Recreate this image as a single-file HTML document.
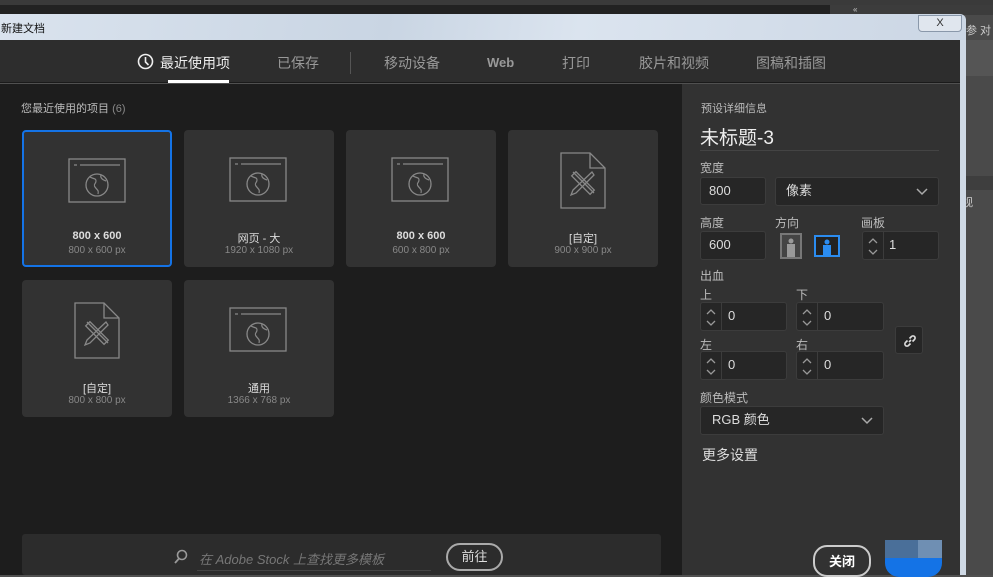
<!DOCTYPE html>
<html><head><meta charset="utf-8"><style>
*{margin:0;padding:0;box-sizing:border-box}
body{width:993px;height:575px;overflow:hidden;background:#505050;font-family:"Liberation Sans","Noto Sans CJK SC",sans-serif;position:relative;color:#ddd}
.a{position:absolute}
.card{position:absolute;width:150px;height:137px;background:#323232;border-radius:4px;text-align:center}
.card .t{position:absolute;top:100px;width:100%;font-size:11px;color:#ddd}
.card .s{position:absolute;top:115px;width:100%;font-size:10px;color:#888}
.card svg{position:absolute;left:45px;top:27px}
.lbl{position:absolute;font-size:12px;color:#bbb}
.box{position:absolute;background:#262626;border:1px solid #3c3c3c;border-radius:3px;font-size:13px;color:#ddd;line-height:26px}
.sp{position:absolute;left:0;top:0;bottom:0;width:21px;border-right:1px solid #3c3c3c}
.sp svg{position:absolute;left:5px;top:6px}
.dd{position:absolute;right:10px;top:10px}
.tab{position:absolute;top:53px;font-size:14px;color:#999}
</style></head><body>
<svg width="0" height="0" style="position:absolute"><defs>
<g id="web"><rect x="1" y="1" width="56" height="43" fill="none" stroke="#888" stroke-width="1.3"/><path d="M6 7h3M12 7h40" stroke="#888" stroke-width="1.3"/><circle cx="29" cy="27" r="11" fill="none" stroke="#888" stroke-width="1.3"/><path d="M22 19c3 2 6 1 6 4s-3 3-1 6 4 3 3 7M33 17c-1 3 2 5 5 6" fill="none" stroke="#888" stroke-width="1.2"/></g>
<g id="doc"><path d="M1 1h29l15 15v40H1z" fill="none" stroke="#888" stroke-width="1.3"/><path d="M30 1v15h15" fill="none" stroke="#888" stroke-width="1.3"/><path d="M13 20l21 21M32 20L13 38l-2 5 5-2 18-18z" fill="none" stroke="#888" stroke-width="1.3"/><rect x="20" y="18" width="6" height="26" transform="rotate(-45 23 31)" fill="none" stroke="#888" stroke-width="1.3"/></g>
<g id="spin"><path d="M1 5l4-4 4 4M1 12l4 4 4-4" fill="none" stroke="#999" stroke-width="1.3"/></g>
<g id="chev"><path d="M1 1l5 5 5-5" fill="none" stroke="#aaa" stroke-width="1.5"/></g>
</defs></svg>
<div class="a" style="left:0;top:0;width:993px;height:5px;background:#3a3a3a"></div>
<div class="a" style="left:0;top:5px;width:830px;height:10px;background:#222"></div>
<div class="a" style="left:830px;top:5px;width:163px;height:10px;background:#3c3c3c;font-size:8px;color:#ccc;padding-left:23px;line-height:10px">«</div>
<div class="a" style="left:966px;top:15px;width:27px;height:560px;background:#4a4a4a"></div>
<div class="a" style="left:966px;top:22px;font-size:11px;color:#ccc">参 对</div>
<div class="a" style="left:966px;top:40px;width:27px;height:36px;background:#555"></div>
<div class="a" style="left:966px;top:176px;width:27px;height:14px;background:#3e3e3e"></div>
<div class="a" style="left:962px;top:194px;font-size:11px;color:#ccc">视</div>
<div class="a" style="left:0;top:14px;width:966px;height:26px;background:linear-gradient(100deg,#dae3ee,#c9d5e3 40%,#dbe4ef 60%,#cbd6e4);border-top-right-radius:6px"></div>
<div class="a" style="left:1px;top:20px;font-size:11px;color:#111">新建文档</div>
<div class="a" style="left:918px;top:15px;width:44px;height:17px;border:1px solid #8a98aa;border-radius:0 0 4px 4px;background:#e0e6ee;text-align:center;font-size:11px;line-height:15px;color:#333">X</div>
<div class="a" style="left:960px;top:40px;width:6px;height:535px;background:#cfd9e5"></div>
<div class="a" style="left:0;top:40px;width:960px;height:43px;background:#2d2d2d;border-bottom:1px solid #1a1a1a"></div>
<svg class="a" style="left:137px;top:53px" width="17" height="17"><circle cx="8.5" cy="8.5" r="7" fill="none" stroke="#eee" stroke-width="1.6"/><path d="M8.5 4v5l3 3" fill="none" stroke="#eee" stroke-width="1.6"/></svg>
<div class="tab" style="left:160px;color:#eee">最近使用项</div>
<div class="a" style="left:168px;top:80px;width:61px;height:3px;background:#fff"></div>
<div class="tab" style="left:277px">已保存</div>
<div class="a" style="left:350px;top:52px;width:1px;height:22px;background:#555"></div>
<div class="tab" style="left:384px">移动设备</div>
<div class="tab" style="left:487px;top:55px;font-size:13px;font-weight:bold">Web</div>
<div class="tab" style="left:562px">打印</div>
<div class="tab" style="left:639px">胶片和视频</div>
<div class="tab" style="left:756px">图稿和插图</div>
<div class="a" style="left:0;top:84px;width:682px;height:491px;background:#1d1d1d"></div>
<div class="a" style="left:21px;top:100px;font-size:11px;color:#bbb">您最近使用的项目 <span style="color:#888">(6)</span></div>
<div class="card" style="left:22px;top:130px;border:2px solid #1473e6"><svg width="58" height="46" style="left:44px;top:26px"><use href="#web"/></svg><div class="t" style="font-weight:bold;top:98px">800 x 600</div><div class="s" style="top:113px">800 x 600 px</div></div>
<div class="card" style="left:184px;top:130px"><svg width="58" height="46"><use href="#web"/></svg><div class="t">网页 - 大</div><div class="s">1920 x 1080 px</div></div>
<div class="card" style="left:346px;top:130px"><svg width="58" height="46"><use href="#web"/></svg><div class="t" style="font-weight:bold">800 x 600</div><div class="s">600 x 800 px</div></div>
<div class="card" style="left:508px;top:130px"><svg width="47" height="58" style="left:52px;top:22px"><use href="#doc"/></svg><div class="t">[自定]</div><div class="s">900 x 900 px</div></div>
<div class="card" style="left:22px;top:280px"><svg width="47" height="58" style="left:52px;top:22px"><use href="#doc"/></svg><div class="t">[自定]</div><div class="s">800 x 800 px</div></div>
<div class="card" style="left:184px;top:280px"><svg width="58" height="46"><use href="#web"/></svg><div class="t">通用</div><div class="s">1366 x 768 px</div></div>
<div class="a" style="left:22px;top:534px;width:639px;height:41px;background:#2c2c2c;border-radius:3px"></div>
<svg class="a" style="left:174px;top:549px" width="14" height="16"><circle cx="8" cy="6" r="4.5" fill="none" stroke="#999" stroke-width="1.6"/><path d="M5 9.5L1 14" stroke="#999" stroke-width="1.8"/></svg>
<div class="a" style="left:199px;top:549px;font-size:13px;color:#777;font-style:italic">在 Adobe Stock 上查找更多模板</div>
<div class="a" style="left:197px;top:570px;width:234px;height:1px;background:#444"></div>
<div class="a" style="left:446px;top:543px;width:57px;height:28px;border:2px solid #aaa;border-radius:14px;text-align:center;font-size:13px;line-height:24px;color:#ddd">前往</div>
<div class="a" style="left:682px;top:84px;width:278px;height:491px;background:#323232"></div>
<div class="lbl" style="left:701px;top:100px;font-size:11px">预设详细信息</div>
<div class="a" style="left:700px;top:123px;font-size:19px;color:#eee">未标题-3</div>
<div class="a" style="left:700px;top:150px;width:239px;height:1px;background:#444"></div>
<div class="lbl" style="left:700px;top:159px">宽度</div>
<div class="box" style="left:700px;top:177px;width:66px;height:28px;padding-left:8px">800</div>
<div class="box" style="left:775px;top:177px;width:164px;height:29px;padding-left:10px">像素<svg class="dd" width="12" height="8"><use href="#chev"/></svg></div>
<div class="lbl" style="left:700px;top:214px">高度</div>
<div class="lbl" style="left:775px;top:214px">方向</div>
<div class="lbl" style="left:861px;top:214px">画板</div>
<div class="box" style="left:700px;top:231px;width:66px;height:29px;padding-left:8px">600</div>
<svg class="a" style="left:780px;top:233px" width="22" height="26"><rect x="1" y="1" width="20" height="24" fill="#444" stroke="#777" stroke-width="2"/><circle cx="11" cy="8" r="2.5" fill="#999"/><rect x="7" y="11" width="8" height="13" fill="#999"/></svg>
<svg class="a" style="left:814px;top:235px" width="26" height="22"><rect x="1" y="1" width="24" height="20" fill="#222" stroke="#2b8cf0" stroke-width="2"/><circle cx="13" cy="7" r="2.5" fill="#2b8cf0"/><rect x="9" y="10" width="8" height="11" fill="#2b8cf0"/></svg>
<div class="box" style="left:862px;top:231px;width:77px;height:29px;padding-left:26px"><div class="sp"><svg width="10" height="17"><use href="#spin"/></svg></div>1</div>
<div class="lbl" style="left:700px;top:267px">出血</div>
<div class="lbl" style="left:700px;top:286px">上</div>
<div class="lbl" style="left:796px;top:286px">下</div>
<div class="box" style="left:700px;top:302px;width:87px;height:29px;padding-left:27px"><div class="sp"><svg width="10" height="17"><use href="#spin"/></svg></div>0</div>
<div class="box" style="left:796px;top:302px;width:88px;height:29px;padding-left:27px"><div class="sp"><svg width="10" height="17"><use href="#spin"/></svg></div>0</div>
<div class="box" style="left:895px;top:326px;width:28px;height:28px"><svg class="a" style="left:7px;top:7px" width="14" height="14"><path d="M6 8L8 6M4.5 6.5l-2 2a2.1 2.1 0 003 3l2-2M9.5 7.5l2-2a2.1 2.1 0 00-3-3l-2 2" fill="none" stroke="#ddd" stroke-width="1.6"/></svg></div>
<div class="lbl" style="left:700px;top:336px">左</div>
<div class="lbl" style="left:796px;top:336px">右</div>
<div class="box" style="left:700px;top:351px;width:87px;height:29px;padding-left:27px"><div class="sp"><svg width="10" height="17"><use href="#spin"/></svg></div>0</div>
<div class="box" style="left:796px;top:351px;width:88px;height:29px;padding-left:27px"><div class="sp"><svg width="10" height="17"><use href="#spin"/></svg></div>0</div>
<div class="lbl" style="left:700px;top:389px">颜色模式</div>
<div class="box" style="left:700px;top:406px;width:184px;height:29px;padding-left:11px">RGB 颜色<svg class="dd" width="12" height="8"><use href="#chev"/></svg></div>
<div class="a" style="left:702px;top:445px;font-size:14px;color:#ddd">更多设置</div>
<div class="a" style="left:813px;top:545px;width:58px;height:32px;border:2px solid #ccc;border-radius:14px;text-align:center;font-size:13px;line-height:30px;color:#fff;font-weight:bold">关闭</div>
<div class="a" style="left:885px;top:545px;width:57px;height:32px;background:#1473e6;border-radius:14px"></div>
<div class="a" style="left:885px;top:540px;width:33px;height:18px;background:#4a6f99"></div>
<div class="a" style="left:918px;top:540px;width:24px;height:18px;background:#6f8fb3"></div>
</body></html>
